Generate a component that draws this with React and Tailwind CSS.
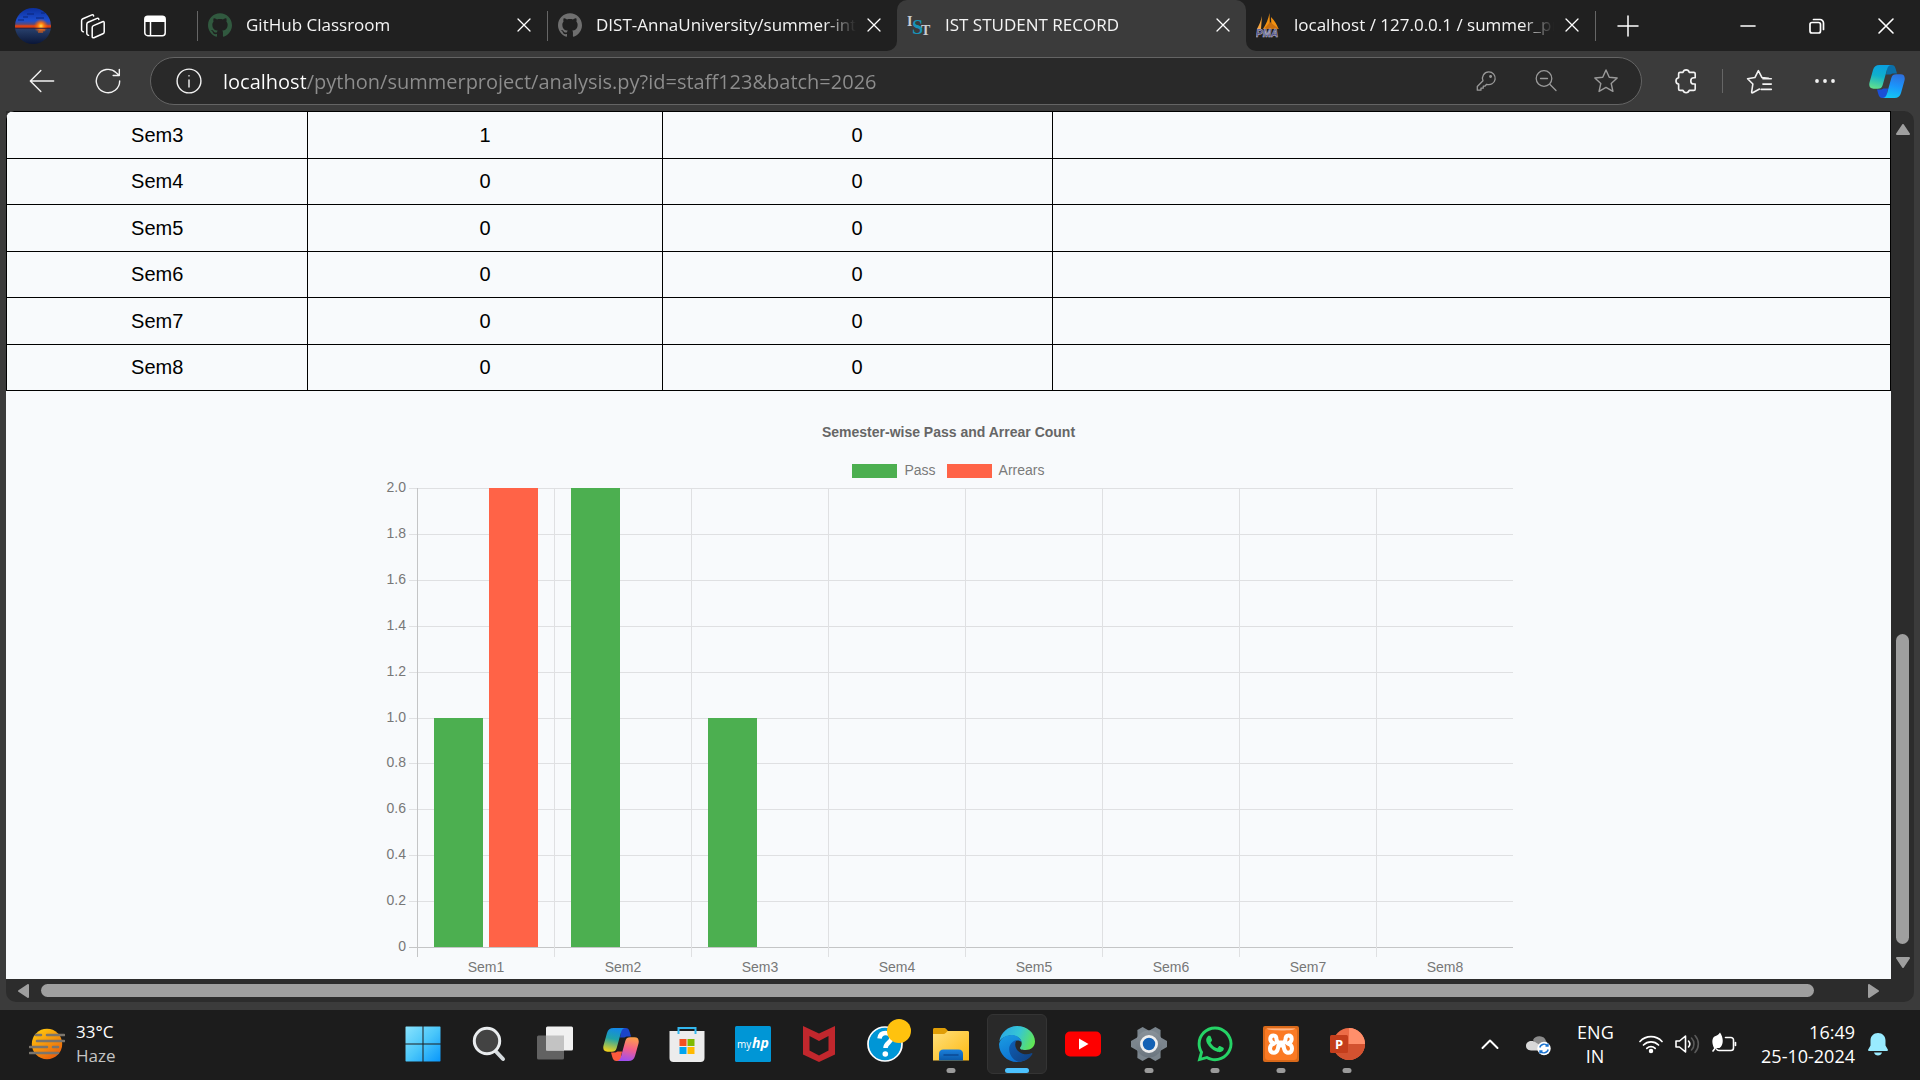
import React from "react";
import { SiGithub } from "react-icons/si";
import { FaWhatsapp } from "react-icons/fa";

const UI = "font-['Open_Sans','Noto_Sans',sans-serif]";
const ARIAL = "font-['Liberation_Sans',Arial,sans-serif]";

/* ---------- line icons ---------- */

function Line({ size = 24, width = 1.3, children, className = "" }) {
  return (
    <svg width={size} height={size} viewBox="0 0 24 24" fill="none" stroke="currentColor" strokeWidth={width} strokeLinecap="round" strokeLinejoin="round" className={className} aria-hidden="true">
      {children}
    </svg>
  );
}

const CloseX = () => (
  <Line size={24}><path d="M6 6l12 12M18 6L6 18" /></Line>
);

const Workspaces = () => (
  <svg width="26" height="26" viewBox="0 0 26 26" fill="none" stroke="#fff" strokeWidth="1.500" strokeLinecap="round" strokeLinejoin="round" aria-hidden="true">
    <path d="M12.200 14.500c0-1 .400-1.500 1.300-1.900l9-3.900c1-.400 1.700 0 1.700 1v9.200c0 1-.400 1.500-1.300 1.900l-9 3.900c-1 .400-1.700 0-1.700-1z" />
    <path d="M8.600 22.300l-1-.500c-.500-.300-.800-.700-.800-1.300V11.200c0-1 .400-1.500 1.300-1.900l9-3.900c1-.400 1.700 0 1.700 1" />
    <path d="M3.400 18.800l-1-.500c-.500-.300-.800-.700-.800-1.300V7.700c0-1 .400-1.500 1.300-1.900l9-3.900c1-.400 1.700 0 1.700 1" />
  </svg>
);

const TabActions = () => (
  <svg width="24" height="24" viewBox="0 0 24 24" fill="none" aria-hidden="true">
    <rect x="1.800" y="2.300" width="20.400" height="19.400" rx="3" stroke="#fff" strokeWidth="1.500" />
    <path d="M2 8V5a3 3 0 0 1 3-3h14a3 3 0 0 1 3 3v3z" fill="#fff" />
    <path d="M7.500 8v13.500" stroke="#fff" strokeWidth="1.500" />
  </svg>
);

/* ---------- colour icons ---------- */

const Avatar = () => (
  <svg width="36" height="36" viewBox="0 0 36 36" aria-hidden="true">
    <defs>
      <linearGradient id="sky" x1="0" y1="0" x2="0" y2="1">
        <stop offset="0" stopColor="#0c2f9c" />
        <stop offset=".36" stopColor="#1d4fd0" />
        <stop offset=".45" stopColor="#5a4a7a" />
        <stop offset=".5" stopColor="#f0420c" />
        <stop offset=".54" stopColor="#c23c14" />
        <stop offset=".57" stopColor="#28406c" />
        <stop offset="1" stopColor="#0a1638" />
      </linearGradient>
      <radialGradient id="glow" cx=".72" cy=".5" r=".2">
        <stop offset="0" stopColor="#ffe14a" />
        <stop offset=".4" stopColor="#ff7a12" />
        <stop offset="1" stopColor="#ff5a00" stopOpacity="0" />
      </radialGradient>
      <clipPath id="disc"><circle cx="18" cy="18" r="18" /></clipPath>
    </defs>
    <g clipPath="url(#disc)">
      <rect width="36" height="36" fill="url(#sky)" />
      <rect width="36" height="36" fill="url(#glow)" />
      <path d="M0 20.300h36" stroke="#33203c" strokeWidth="1" />
      <path d="M24 22h6M23 24h5" stroke="#d8601c" strokeWidth="1" />
      <path d="M3 12h6M12 6h7M21 10h8M8 9h5M26 5h4" stroke="#0a2478" strokeWidth="1.200" />
    </g>
  </svg>
);

const IstIcon = () => (
  <svg width="24" height="28" viewBox="0 0 24 28" className="font-['Liberation_Serif',serif] font-bold" aria-hidden="true">
    <text x="0" y="15" fontSize="14" fill="#c9cdd2">I</text>
    <text x="5" y="23" fontSize="20" fill="#1793b8">S</text>
    <text x="14" y="24" fontSize="14" fill="#c9cdd2">T</text>
  </svg>
);

const PmaIcon = () => (
  <svg width="24" height="26" viewBox="0 0 24 26" aria-hidden="true">
    <path d="M6 4L5 17H1C3 13 5 9 6 4z" fill="#f7a43c" />
    <path d="M13.500 1L14 17H7C10 12 12.500 7 13.500 1z" fill="#f29111" />
    <path d="M15 5c4 4 6 8 7.500 12H15.500z" fill="#f29111" />
    <path d="M8 17l6-7 9 7z" fill="#c96f10" />
    <text x="0" y="25" fontSize="10" fontStyle="italic" className="font-['Liberation_Sans',sans-serif] font-bold" fill="#3c3a78" stroke="#c8c8dc" strokeWidth=".5">PMA</text>
  </svg>
);

function Copilot({ id, colors }) {
  const left = "M10.500 0H22c-2.400.500-3.300 2-4 4.500L13.700 20c-.800 2.800-2.200 3.700-5 3.700H4.500C.800 23.700-.300 21.200.500 17.500L4 5C5 1.600 7 0 10.500 0z";
  const fold = "M18 0h4.500c2.700 0 3.600 1.500 4.300 4.200L28 8.500h-3.200c-2.300 0-3.300 1-4 3.300L18.500 19l-3-4 2.500-10z";
  return (
    <svg width="36" height="33" viewBox="0 0 36 33" aria-hidden="true">
      <defs>
        <linearGradient id={id + "l"} x1=".5" y1="0" x2=".3" y2="1">
          <stop offset="0" stopColor={colors[0]} /><stop offset=".45" stopColor={colors[1]} /><stop offset="1" stopColor={colors[2]} />
        </linearGradient>
        <linearGradient id={id + "r"} x1=".5" y1="0" x2=".3" y2="1">
          <stop offset="0" stopColor={colors[3]} /><stop offset=".5" stopColor={colors[4]} /><stop offset="1" stopColor={colors[5]} />
        </linearGradient>
        <clipPath id={id + "c"}><path d="M0 0h36v9.500H17z" /></clipPath>
      </defs>
      <g clipPath={`url(#${id}c)`}><path d={fold} fill={colors[6]} /></g>
      <g transform="rotate(180 18 16.500)"><g clipPath={`url(#${id}c)`}><path d={fold} fill={colors[7]} /></g></g>
      <path d={left} fill={`url(#${id}l)`} />
      <path d={left} transform="rotate(180 18 16.500)" fill={`url(#${id}r)`} />
    </svg>
  );
}

const StartIcon = () => (
  <svg width="36" height="36" viewBox="0 0 36 36" aria-hidden="true">
    <defs>
      <linearGradient id="win" x1="0" y1="0" x2="36" y2="36" gradientUnits="userSpaceOnUse">
        <stop offset="0" stopColor="#8be4fd" /><stop offset=".5" stopColor="#4bc7fa" /><stop offset="1" stopColor="#0695fb" />
      </linearGradient>
    </defs>
    <path d="M1 .5h16.500v17H.5V1zM18.500.5H35l.500.500v16.500h-17zM.5 18.500h17v17H1l-.500-.500zM18.500 18.500h17V35l-.500.500H18.500z" fill="url(#win)" />
  </svg>
);

const SearchIcon = () => (
  <svg width="36" height="36" viewBox="0 0 36 36" fill="none" aria-hidden="true">
    <path d="M24.500 25l7.500 8" stroke="#d5dadd" strokeWidth="4" strokeLinecap="round" />
    <circle cx="16" cy="15" r="12.700" fill="#434343" stroke="#e9ecee" strokeWidth="3" />
  </svg>
);

const TaskViewIcon = () => (
  <svg width="36" height="36" viewBox="0 0 36 36" aria-hidden="true">
    <rect x="0" y="9.500" width="27" height="24" rx="1.500" fill="#626262" />
    <rect x="9" y=".5" width="27" height="24" rx="1.500" fill="#f1f1f1" />
    <rect x="9" y="9.500" width="18" height="15" fill="#c3c3c3" />
  </svg>
);

const StoreIcon = () => (
  <svg width="36" height="36" viewBox="0 0 36 36" fill="none" aria-hidden="true">
    <path d="M.5 5h35v27a4 4 0 0 1-4 4h-27a4 4 0 0 1-4-4z" fill="#ececec" />
    <path d="M9.500 8V2h17v6" stroke="#33b7ee" strokeWidth="2" />
    <rect x="10.500" y="13" width="7" height="7" fill="#f25022" /><rect x="18.500" y="13" width="7" height="7" fill="#7fba00" />
    <rect x="10.500" y="21" width="7" height="7" fill="#00a4ef" /><rect x="18.500" y="21" width="7" height="7" fill="#ffb900" />
  </svg>
);

const MyHpIcon = () => (
  <svg width="36" height="36" viewBox="0 0 36 36" className="font-['Open_Sans',sans-serif]" aria-hidden="true">
    <rect width="36" height="36" rx="1.500" fill="#0096d6" />
    <text x="2" y="21.500" fontSize="10" fill="#fff">my</text>
    <text x="17" y="21.500" fontSize="14" fontStyle="italic" fontWeight="700" fill="#fff">hp</text>
  </svg>
);

const McAfeeIcon = () => (
  <svg width="36" height="36" viewBox="0 0 36 36" aria-hidden="true">
    <path d="M2 0l16 7.500L34 0v28.500L18 36 2 28.500zM8.500 10v14.500l9.500 5 9.500-5V10L18 15z" fillRule="evenodd" fill="#c1272d" />
  </svg>
);

const HelpIcon = () => (
  <svg width="44" height="44" viewBox="0 0 44 44" fill="none" aria-hidden="true">
    <circle cx="18" cy="26" r="17" fill="#0096d6" stroke="#fff" strokeWidth="1.700" />
    <path d="M12.500 20.500c.500-4 3-5.500 6-5.500 3.500 0 6 2 6 5 0 4.500-6 4.500-6 10" stroke="#fff" strokeWidth="4.500" />
    <circle cx="18.300" cy="36" r="2.800" fill="#fff" />
    <circle cx="32" cy="13" r="12" fill="#ffc20e" />
  </svg>
);

const ExplorerIcon = () => (
  <svg width="36" height="36" viewBox="0 0 36 36" aria-hidden="true">
    <defs>
      <linearGradient id="fold" x1="0" y1="0" x2="1" y2="1"><stop offset="0" stopColor="#ffe07a" /><stop offset="1" stopColor="#fdb913" /></linearGradient>
      <linearGradient id="tray" x1="0" y1="0" x2="0" y2="1"><stop offset="0" stopColor="#1b80dc" /><stop offset="1" stopColor="#0b59a8" /></linearGradient>
    </defs>
    <path d="M0 3.500C0 2.500.700 2 1.500 2H11c1 0 1.500.300 2 .800L15 5v5H0z" fill="#e09e06" />
    <path d="M0 8h10c1.500 0 2-.400 3-1.200L14.500 5h20c1 0 1.500.500 1.500 1.500v28H0z" fill="url(#fold)" />
    <path d="M6 34.500V28c0-3 1.500-4.500 4.500-4.500h15c3 0 4.500 1.500 4.500 4.500v6.500z" fill="url(#tray)" />
    <path d="M11 29h14" stroke="#0b4a94" strokeWidth="1.500" strokeLinecap="round" />
  </svg>
);

const EdgeIcon = () => (
  <svg width="36" height="36" viewBox="0 0 36 36" aria-hidden="true">
    <defs>
      <linearGradient id="eTop" x1="0" y1=".3" x2="1" y2=".6"><stop offset="0" stopColor="#2aa7e6" /><stop offset=".5" stopColor="#36c6d4" /><stop offset="1" stopColor="#62e653" /></linearGradient>
      <linearGradient id="eLeft" x1="0" y1="0" x2=".5" y2="1"><stop offset="0" stopColor="#1b9de2" /><stop offset="1" stopColor="#0c6fd0" /></linearGradient>
      <linearGradient id="eLow" x1="0" y1="0" x2="1" y2="1"><stop offset="0" stopColor="#0d5fb8" /><stop offset="1" stopColor="#123f7c" /></linearGradient>
    </defs>
    <path d="M.3 15.500C1.700 6.500 9 0 18 0c10.500 0 18 7.500 18 15.500 0 5-4 8.500-9.500 8.500-4 0-5.500-1-5.500-2 0-.900 1.700-1.800 1.700-4.500 0-4.500-4.200-8-10-8C7 9.500 2.500 12 .3 15.500z" fill="url(#eTop)" />
    <path d="M0 18C1.500 12 6.500 9 12.500 9c5.500 0 9.700 3.200 10.200 7.500-1.500-2-4-2.500-6-1.500-3 2-3.500 7 0 11 4 4.500 10 6 15 3.500C28.500 33.500 23.500 36 18 36 8 36 0 28 0 18z" fill="url(#eLeft)" />
    <path d="M17.500 14c-5 1.500-8.500 6-7 12 1.300 5 5 8.800 9.500 9.900 6-.600 10.500-3.400 13.300-7.700.400-.700-.200-1.400-1-1-3.500 1.700-8.500 1.500-12-1.200-4.500-3.500-5-8.500-2.800-12z" fill="url(#eLow)" />
  </svg>
);

const YoutubeIcon = () => (
  <svg width="36" height="26" viewBox="0 0 36 26" aria-hidden="true">
    <rect y=".5" width="36" height="25" rx="5" fill="#fe0000" />
    <path d="M14 7.500v11l9.500-5.500z" fill="#fff" />
  </svg>
);

const SettingsIcon = () => (
  <svg width="36" height="36" viewBox="0 0 36 36" aria-hidden="true">
    <defs>
      <linearGradient id="gear" x1="0" y1="0" x2="0" y2="36" gradientUnits="userSpaceOnUse"><stop offset="0" stopColor="#8e969d" /><stop offset="1" stopColor="#66717b" /></linearGradient>
    </defs>
    <g fill="#7b858d">
      <path d="M0 15l7-4h22l7 4v6l-7 4H7l-7-4z" />
      <path d="M0 15l7-4h22l7 4v6l-7 4H7l-7-4z" transform="rotate(60 18 18)" />
      <path d="M0 15l7-4h22l7 4v6l-7 4H7l-7-4z" transform="rotate(120 18 18)" />
    </g>
    <circle cx="18" cy="18" r="13.500" fill="url(#gear)" />
    <circle cx="18" cy="18" r="7.600" fill="#1461b4" stroke="#eee" strokeWidth="2.800" />
  </svg>
);

const XamppIcon = () => (
  <svg width="36" height="36" viewBox="0 0 36 36" fill="none" aria-hidden="true">
    <rect width="36" height="36" rx="2" fill="#d9691a" />
    <rect x="2" y="2" width="32" height="32" rx="3" fill="#fb7a24" />
    <path d="M4 2.500h28c0 1.200-5 2-14 2s-14-.800-14-2z" fill="#fdb88a" />
    <path d="M13.500 13.500c0-3-1-4-3-4s-3.200 1.300-3.200 3.500c0 2.500 1.500 3.700 4 4.500-2.800.700-4.300 2.500-4.300 5 0 2.700 1.500 4.300 4 4.300 3.500 0 4-3.800 4.500-7.300h5c.500 3.500 1 7.300 4.500 7.300 2.500 0 4-1.600 4-4.300 0-2.500-1.500-4.300-4.300-5 2.500-.800 4-2 4-4.500 0-2.200-1.200-3.500-3.200-3.500s-3 1-3 4l-1 3h-7z" stroke="#fff" strokeWidth="4" strokeLinejoin="round" />
  </svg>
);

const PowerPointIcon = () => (
  <svg width="36" height="36" viewBox="0 0 36 36" aria-hidden="true">
    <circle cx="20" cy="18" r="16" fill="#ed6c47" />
    <path d="M20 2a16 16 0 0 1 16 16H20z" fill="#ff8f6b" />
    <path d="M36 18a16 16 0 0 1-32 0z" fill="#d35230" />
    <rect x="1" y="9" width="18" height="18" rx="1.500" fill="#c43e1c" />
    <text x="10" y="22.500" fontSize="13" textAnchor="middle" fill="#fff" className="font-['Open_Sans',sans-serif] font-bold">P</text>
  </svg>
);

const HazeIcon = () => (
  <svg width="36" height="32" viewBox="0 0 36 32" fill="none" aria-hidden="true">
    <defs><linearGradient id="sun" x1=".2" y1="0" x2=".8" y2="1"><stop offset="0" stopColor="#ffc90e" /><stop offset="1" stopColor="#e8590c" /></linearGradient></defs>
    <circle cx="18" cy="16" r="15.200" fill="url(#sun)" />
    <path d="M7 7h5M18 7h17M8 13h27M1 19h17M24 19h5M1 25h28" stroke="#7b756c" strokeWidth="2.600" strokeLinecap="round" />
  </svg>
);

/* ---------- browser chrome ---------- */

function Tab({ icon, title, active }) {
  return (
    <div className={`relative flex h-full min-w-0 max-w-[349px] flex-1 items-center pb-[9px] pl-[10px] pr-[11px] pt-2 ${active ? "rounded-t-[10px] bg-[#3b3b3b]" : ""}`}>
      {active && (
        <>
          <span className="absolute -left-[10px] bottom-0 size-[10px] bg-[#3b3b3b]"><span className="block size-full rounded-br-[10px] bg-[#202020]" /></span>
          <span className="absolute -right-[10px] bottom-0 size-[10px] bg-[#3b3b3b]"><span className="block size-full rounded-bl-[10px] bg-[#202020]" /></span>
        </>
      )}
      <button type="button" role="tab" aria-selected={!!active} className="flex min-w-0 flex-1 items-center gap-[14px] text-left text-[17px] leading-6 text-[#f4f4f4]">
        <span className="flex w-6 shrink-0 justify-center">{icon}</span>
        <span className="mr-[6px] min-w-0 flex-1 overflow-hidden whitespace-nowrap [mask-image:linear-gradient(to_right,black_calc(100%_-_32px),transparent)]">{title}</span>
      </button>
      <button type="button" aria-label={"Close " + title} className="flex size-6 shrink-0 items-center justify-center text-white"><CloseX /></button>
    </div>
  );
}

const Sep = () => <span className="h-[30px] w-px shrink-0 bg-[#666]" />;

function IconButton({ label, className = "", children }) {
  return <button type="button" aria-label={label} className={`flex h-10 w-10 shrink-0 items-center justify-center ${className}`}>{children}</button>;
}

function TabStrip() {
  return (
    <div className="flex h-[51px] items-center bg-[#202020]">
      <div className="flex items-center gap-[22px] px-[15px] pr-[22px] text-white">
        <button type="button" aria-label="Profile" className="size-9"><Avatar /></button>
        <IconButton label="Workspaces"><Workspaces /></IconButton>
        <IconButton label="Tab actions"><TabActions /></IconButton>
      </div>
      <Sep />
      <div role="tablist" className="flex h-full min-w-0 max-w-[1397px] flex-1 items-center">
        <Tab title="GitHub Classroom" icon={<SiGithub size={24} color="#31593f" />} />
        <Sep />
        <Tab title="DIST-AnnaUniversity/summer-internship" icon={<SiGithub size={24} color="#6f6f6f" />} />
        <Tab active title="IST STUDENT RECORD" icon={<IstIcon />} />
        <Tab title="localhost / 127.0.0.1 / summer_project" icon={<PmaIcon />} />
      </div>
      <Sep />
      <IconButton label="New tab" className="ml-3 text-white"><Line size={30} width={1.2}><path d="M12 4v16M4 12h16" /></Line></IconButton>
      <div className="ml-auto flex h-full text-white">
        <button type="button" aria-label="Minimize" className="flex w-[69px] items-center justify-center"><Line width={1.6}><path d="M5 12h14" /></Line></button>
        <button type="button" aria-label="Restore" className="flex w-[69px] items-center justify-center">
          <Line width={1.7}><rect x="5" y="8.500" width="10.500" height="10.500" rx="2" /><path d="M8.500 5.500H15a3.500 3.500 0 0 1 3.500 3.500v6.500" /></Line>
        </button>
        <button type="button" aria-label="Close window" className="flex w-[69px] items-center justify-center"><Line width={1.6}><path d="M5 5l14 14M19 5L5 19" /></Line></button>
      </div>
    </div>
  );
}

function Toolbar() {
  return (
    <div className="flex h-[60px] items-center bg-[#3b3b3b] pl-[22px] pr-[13px] text-[#f2f2f2]">
      <IconButton label="Back"><Line size={28} width={1.2}><path d="M22 12H2.500M11 3L2 12l9 9" /></Line></IconButton>
      <IconButton label="Refresh" className="ml-[26px]"><Line size={28} width={1.2}><path d="M22 12a10 10 0 1 1-3.200-7.300L21.500 7M21.700 2v5.300h-5.300" /></Line></IconButton>
      <div className="ml-[22px] flex h-12 min-w-0 flex-1 items-center rounded-full border border-[#646464] bg-[#292929] pl-[18px] pr-[15px]">
        <IconButton label="Site information"><Line size={26} width={1.3}><circle cx="12" cy="12" r="11" /><path d="M12 11v6.500M12 7v.300" /></Line></IconButton>
        <input
          type="text"
          aria-label="Address"
          defaultValue="localhost/python/summerproject/analysis.py?id=staff123&batch=2026"
          className="ml-[14px] h-9 min-w-0 flex-1 bg-[linear-gradient(to_right,#ffffff_83px,#8e8e8e_83px)] bg-clip-text text-[20px] text-transparent outline-none"
        />
        <div className="flex gap-5 text-[#9a9a9a]">
          <IconButton label="Saved passwords">
            <Line size={22} width={1.4}><path d="M15 2a7 7 0 1 1-2.300 13.600L11 17.500H9v2.300H6.500V22H2.500v-4l6.200-6.200A7 7 0 0 1 15 2z" /><circle cx="17" cy="7" r=".9" /></Line>
          </IconButton>
          <IconButton label="Zoom out"><Line size={24} width={1.3}><circle cx="10" cy="9.500" r="7.800" /><path d="M16 15.500l6 6M6.500 9.500h7" /></Line></IconButton>
          <IconButton label="Add to favorites"><Line size={26} width={1.3}><path d="M12 1.800l3 6.800 7.300.700-5.500 5 1.600 7.300L12 17.900l-6.400 3.700 1.600-7.300-5.500-5L9 8.600z" /></Line></IconButton>
        </div>
      </div>
      <IconButton label="Extensions" className="ml-6">
        <Line size={26} width={1.5}><path d="M9.200 4a3 3 0 0 1 5.800 0h4.200c.800 0 1.300.500 1.300 1.300V9h-1.200a2.900 2.900 0 0 0 0 5.800h1.200v4.500c0 .800-.500 1.300-1.300 1.300H15a3 3 0 0 1-5.800 0H6.500c-.800 0-1.300-.500-1.300-1.300v-4.400a3 3 0 0 1 0-5.900V5.300C5.200 4.500 5.700 4 6.500 4z" /></Line>
      </IconButton>
      <span className="ml-4 h-6 w-px shrink-0 bg-[#666]" />
      <IconButton label="Favorites" className="ml-4">
        <Line size={27} width={1.4}><path d="M20 9.200l-5.800-.700L11 2.300 7.900 8.500l-6.500 1 4.700 4.700L5 21.500c0 .500.400.700.900.500l6.100-3.300M15 9.500h7.500M15 14.300h7.500M13.500 19h9" /></Line>
      </IconButton>
      <IconButton label="Settings and more" className="ml-[26px]">
        <svg width="24" height="24" fill="currentColor" aria-hidden="true"><circle cx="4" cy="12" r="1.900" /><circle cx="12" cy="12" r="1.900" /><circle cx="20" cy="12" r="1.900" /></svg>
      </IconButton>
      <IconButton label="Copilot" className="ml-[22px]">
        <Copilot id="cpb" colors={["#0aa0e0", "#10b0cc", "#62e08c", "#14c4f4", "#1b94fb", "#2f6fdc", "#0b6fa8", "#1b4fd6"]} />
      </IconButton>
    </div>
  );
}

/* ---------- page ---------- */

const ROWS = [
  ["Sem3", 1, 0], ["Sem4", 0, 0], ["Sem5", 0, 0], ["Sem6", 0, 0], ["Sem7", 0, 0], ["Sem8", 0, 0],
];

function ResultTable() {
  return (
    <table className="h-[280px] w-full table-fixed border-collapse text-center text-[20px] leading-6 text-black">
      <colgroup>
        <col className="w-[16%]" /><col className="w-[18.8%]" /><col className="w-[20.7%]" /><col />
      </colgroup>
      <tbody>
        {ROWS.map(([sem, pass, arrears]) => (
          <tr key={sem}>
            <td className="border border-black">{sem}</td>
            <td className="border border-black">{pass}</td>
            <td className="border border-black">{arrears}</td>
            <td className="border border-black" />
          </tr>
        ))}
      </tbody>
    </table>
  );
}

const SEMS = [
  { name: "Sem1", pass: 1, arrears: 2 }, { name: "Sem2", pass: 2, arrears: 0 }, { name: "Sem3", pass: 1, arrears: 0 }, { name: "Sem4", pass: 0, arrears: 0 },
  { name: "Sem5", pass: 0, arrears: 0 }, { name: "Sem6", pass: 0, arrears: 0 }, { name: "Sem7", pass: 0, arrears: 0 }, { name: "Sem8", pass: 0, arrears: 0 },
];
const TICKS = ["0", "0.2", "0.4", "0.6", "0.8", "1.0", "1.2", "1.4", "1.6", "1.8", "2.0"];

function Chart() {
  const x0 = 37, step = 137, top = 8, bottom = 467, h = bottom - top;
  const yOf = (v) => Math.round(bottom - (v / 2) * h);
  return (
    <section className={`flex flex-col items-center pt-8 text-[#666] ${ARIAL}`}>
      <h2 className="text-[14px] font-bold leading-[18px]">Semester-wise Pass and Arrear Count</h2>
      <div className="mt-[21px] flex h-[18px] gap-[11px] text-[14px] leading-4 text-[#7a7a7a]">
        <span className="flex gap-[7px]"><span className="mt-[2px] h-[14px] w-[45px] bg-[#4caf50]" />Pass</span>
        <span className="flex gap-[7px]"><span className="mt-[2px] h-[14px] w-[45px] bg-[#ff6347]" />Arrears</span>
      </div>
      <svg width="1138" height="499" viewBox="0 0 1138 499" className="max-w-full shrink-0" role="img" aria-label="Pass and arrear counts per semester">
        {TICKS.map((t) => (
          <g key={t}>
            <rect x="29" y={yOf(Number(t))} width="1104" height="1" fill={t === "0" ? "#c4c5c6" : "#dfe0e2"} />
            <text x="26" y={yOf(Number(t)) + 4} fontSize="14" textAnchor="end" fill="#777">{t}</text>
          </g>
        ))}
        {SEMS.map((s, i) => (
          <g key={s.name}>
            <rect x={x0 + i * step} y={top} width="1" height={h + 10} fill={i === 0 ? "#c4c5c6" : "#dfe0e2"} />
            {s.pass > 0 && <rect x={x0 + i * step + 17} y={yOf(s.pass)} width="49" height={bottom - yOf(s.pass)} fill="#4caf50" />}
            {s.arrears > 0 && <rect x={x0 + i * step + 72} y={yOf(s.arrears)} width="49" height={bottom - yOf(s.arrears)} fill="#ff6347" />}
            <text x={x0 + i * step + 69} y="492" fontSize="14" textAnchor="middle" fill="#777">{s.name}</text>
          </g>
        ))}
      </svg>
    </section>
  );
}

function Arrow({ d, w, h }) {
  return <svg width={w} height={h} viewBox={`0 0 ${w} ${h}`} aria-hidden="true"><path d={d} fill="#9f9f9f" stroke="#9f9f9f" strokeWidth="2" strokeLinejoin="round" /></svg>;
}

function Viewport() {
  return (
    <div className="flex min-h-0 flex-1 flex-col bg-[#3b3b3b] pb-2 pl-[6px] pr-[6px]">
      <div className="flex min-h-0 flex-1 rounded-tr-[10px] bg-[#2c2c2c]">
        <main className={`min-w-0 flex-1 overflow-hidden rounded-tl-[8px] bg-[#f8fafc] ${ARIAL}`}>
          <ResultTable />
          <Chart />
        </main>
        <div className="flex w-[23px] shrink-0 flex-col items-center pb-[11px] pt-[13px]">
          <Arrow w={14} h={11} d="M7 1l6 9H1z" />
          <div className="flex w-[13px] flex-1 flex-col justify-end py-[13px]"><div className="h-[39%] rounded-full bg-[#9f9f9f]" /></div>
          <Arrow w={14} h={11} d="M7 10l6-9H1z" />
        </div>
      </div>
      <div className="flex h-[23px] shrink-0 items-center rounded-b-[10px] bg-[#2c2c2c] pl-3 pr-[35px]">
        <Arrow w={11} h={14} d="M1 7l9-6v12z" />
        <div className="mx-3 h-[13px] flex-1"><div className="h-full w-[97.7%] rounded-full bg-[#9f9f9f]" /></div>
        <Arrow w={11} h={14} d="M10 7L1 1v12z" />
      </div>
    </div>
  );
}

/* ---------- taskbar ---------- */

const APPS = [
  { name: "Start", icon: <StartIcon /> },
  { name: "Search", icon: <SearchIcon /> },
  { name: "Task view", icon: <TaskViewIcon /> },
  { name: "Copilot", icon: <Copilot id="cpt" colors={["#1488e8", "#1fa3a8", "#f2d21b", "#a04ff0", "#f45f8a", "#fda04a", "#1b44c8", "#fb5a3c"]} /> },
  { name: "Microsoft Store", icon: <StoreIcon /> },
  { name: "myHP", icon: <MyHpIcon /> },
  { name: "McAfee", icon: <McAfeeIcon /> },
  { name: "HP Support Assistant", icon: <span className="-mt-2 ml-2"><HelpIcon /></span> },
  { name: "File Explorer", icon: <ExplorerIcon />, open: true },
  { name: "Microsoft Edge", icon: <EdgeIcon />, active: true },
  { name: "YouTube", icon: <YoutubeIcon /> },
  { name: "Settings", icon: <SettingsIcon />, open: true },
  { name: "WhatsApp", icon: <FaWhatsapp size={40} color="#25d366" />, open: true },
  { name: "XAMPP", icon: <XamppIcon />, open: true },
  { name: "PowerPoint", icon: <PowerPointIcon />, open: true },
];

function Taskbar() {
  return (
    <footer className="flex h-[70px] shrink-0 items-center bg-[#1c1c1c] pb-[2px] text-[17px] leading-6 text-white">
      <div className="w-[393px] shrink-0 pl-[29px]">
        <button type="button" className="flex items-center gap-[11px] text-left">
          <HazeIcon />
          <span><span className="block">33°C</span><span className="block text-[#c4c4c4]">Haze</span></span>
        </button>
      </div>
      <nav className="flex gap-[6px]">
        {APPS.map((a) => (
          <button key={a.name} type="button" aria-label={a.name} className={`relative flex size-[60px] items-center justify-center rounded-md ${a.active ? "border border-[#343434] bg-[#292929]" : ""}`}>
            {a.icon}
            {a.open && <span className="absolute bottom-px left-1/2 h-[5px] w-[9px] -translate-x-1/2 rounded-full bg-[#9a9a9a]" />}
            {a.active && <span className="absolute bottom-0 left-1/2 h-[5px] w-6 -translate-x-1/2 rounded-full bg-[#4cc2ff]" />}
          </button>
        ))}
      </nav>
      <div className="ml-auto flex items-center pr-[32px] text-[18px]">
        <button type="button" aria-label="Show hidden icons" className="flex size-6 items-center justify-center"><Line size={24} width={2}><path d="M4.500 16L12 8.500l7.500 7.500" /></Line></button>
        <button type="button" aria-label="OneDrive" className="ml-6">
          <svg width="26" height="24" viewBox="0 0 26 24" fill="none" aria-hidden="true">
            <path d="M7 8a7 6.500 0 0 1 13 1l2 3-9 5z" fill="#8c8c8c" />
            <path d="M5 18.500c-3 0-5-2-5-4.700C0 11 2.500 9 5.500 9c2 0 3 .500 5 2l7 4-3 3.500z" fill="#d8d8d8" />
            <circle cx="18" cy="16.500" r="6.700" fill="#fff" />
            <path d="M13.800 15.500a4.500 4.500 0 0 1 8-1.500M22.200 17.500a4.500 4.500 0 0 1-8 1.500M22 11.500V14h-2.500M14 21.500V19h2.500" stroke="#1a73d0" strokeWidth="1.400" />
          </svg>
        </button>
        <button type="button" className="ml-[25px] w-[36px] text-center">ENG<br />IN</button>
        <button type="button" aria-label="Network, sound and battery" className="ml-[26px] flex items-center gap-3">
          <svg width="24" height="20" viewBox="0 0 24 20" fill="none" stroke="#fff" strokeWidth="1.700" strokeLinecap="round" aria-hidden="true">
            <path d="M1 7.500a15 15 0 0 1 22 0M4.500 11a10.500 10.500 0 0 1 15 0M7.800 14.300a6 6 0 0 1 8.400 0" /><circle cx="12" cy="17" r="1.400" fill="#fff" />
          </svg>
          <svg width="25" height="22" viewBox="0 0 25 22" fill="none" stroke="#fff" strokeWidth="1.600" strokeLinecap="round" strokeLinejoin="round" aria-hidden="true">
            <path d="M1 8v6h3.500L10.500 19V3L4.500 8zM13.500 8a4.500 4.500 0 0 1 0 6" /><path d="M16.500 5a8.500 8.500 0 0 1 0 12M20 2.500a12.500 12.500 0 0 1 0 17" stroke="#5a5a5a" />
          </svg>
          <svg width="25" height="24" viewBox="0 0 25 24" fill="none" stroke="#fff" strokeWidth="1.600" strokeLinecap="round" aria-hidden="true">
            <path d="M2 16C-.500 11 0 6 2.500 4.500 5 3.300 6.500 3 8 .5c3.500 5 4 12.500-.500 15.500z" fill="#fff" stroke="none" />
            <path d="M1 19l3-4" />
            <path d="M13.500 5.500h5.500A2.500 2.500 0 0 1 21.500 8v8a2.500 2.500 0 0 1-2.500 2.500H7c-1.200 0-2-.500-2.500-1.500M23.500 10.500v3" />
          </svg>
        </button>
        <button type="button" className="ml-6 text-right">16:49<br />25-10-2024</button>
        <button type="button" aria-label="Notifications" className="ml-[13px]">
          <svg width="20" height="24" viewBox="0 0 20 24" fill="#99ebff" aria-hidden="true">
            <path d="M10 1c4.500 0 7.500 3.300 7.500 7.500v5l2.300 4c.400.800 0 1.500-.800 1.500H1c-.800 0-1.200-.700-.800-1.500l2.300-4v-5C2.500 4.300 5.500 1 10 1zM6 20.500h8c-.500 1.700-2 3-4 3s-3.500-1.300-4-3z" />
          </svg>
        </button>
      </div>
    </footer>
  );
}

export default function App() {
  return (
    <div className={`flex h-screen flex-col overflow-hidden bg-[#3b3b3b] ${UI}`}>
      <TabStrip />
      <Toolbar />
      <Viewport />
      <Taskbar />
    </div>
  );
}
